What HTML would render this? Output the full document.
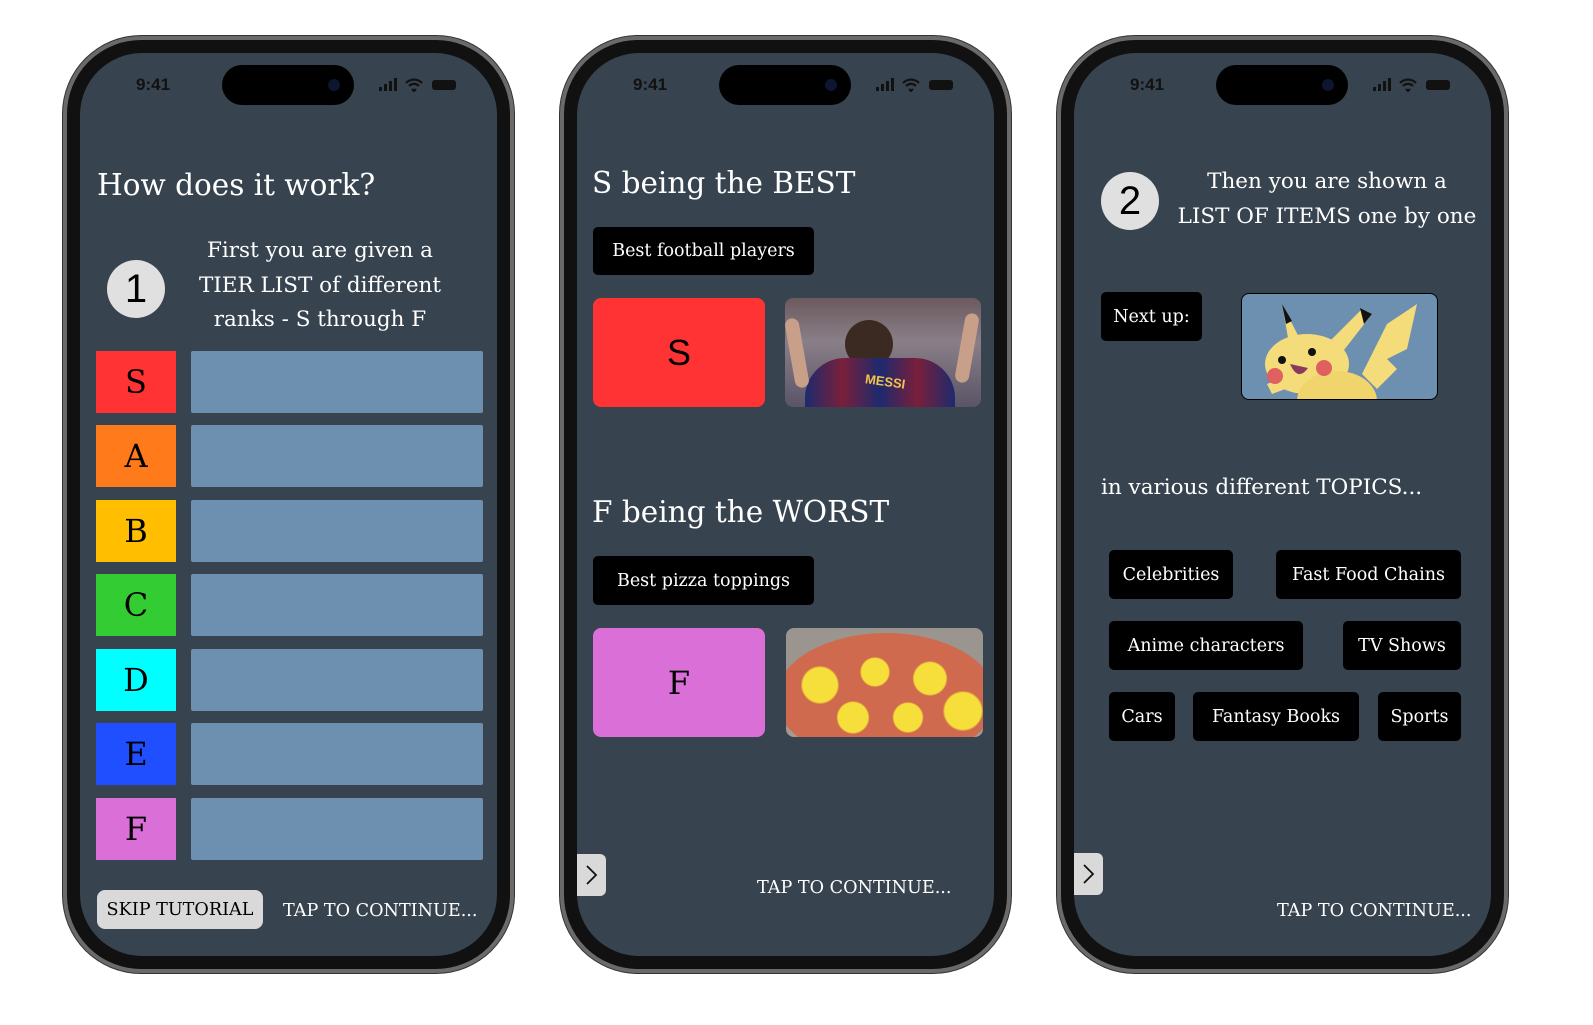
<!DOCTYPE html>
<html><head><meta charset="utf-8">
<style>
*{margin:0;padding:0;box-sizing:border-box}
body{width:1593px;height:1025px;background:#fff;position:relative;overflow:hidden;font-family:"DejaVu Serif","Liberation Serif",serif;color:#fff}
.a{position:absolute}
.phone{position:absolute;top:36px;width:451px;height:937px;border-radius:78px;background:#111;border:4px solid #6a6a6a;box-shadow:0 0 0 1px #333}
.scr{position:absolute;left:13px;top:13px;right:13px;bottom:13px;border-radius:62px;background:#37434f;overflow:hidden}
.island{position:absolute;top:12px;left:142px;width:132px;height:40px;border-radius:20px;background:#000}
.island:after{content:"";position:absolute;right:14px;top:14px;width:12px;height:12px;border-radius:6px;background:#0d1530}
.time{position:absolute;top:22px;left:56px;font:bold 17px "Liberation Sans",sans-serif;color:#111}
.stat{position:absolute;top:25px;right:38px;width:80px;height:14px}
.t{position:absolute;white-space:nowrap}
.pill{position:absolute;background:#000;border-radius:5px;color:#fff;font-size:17.5px;display:flex;align-items:center;justify-content:center;white-space:nowrap}
.lab{position:absolute;width:80px;height:62px;left:96px;color:#000;font-size:32px;display:flex;align-items:center;justify-content:center}
.bar{position:absolute;left:191px;width:292px;height:62px;background:#6d8fb0;border-radius:2px}
.circ{position:absolute;width:58px;height:58px;border-radius:29px;background:#e0e0e0;color:#000;font:40px "Liberation Sans",sans-serif;display:flex;align-items:center;justify-content:center}
.tab{position:absolute;width:29px;height:42px;background:#d9d9d9;border-radius:0 6px 6px 0}
.h{font-size:29.5px}
.m{font-size:21.5px}
.c{font-size:17.6px}
</style></head><body>

<div class="phone" style="left:63px"><div class="scr"><div class="island"></div><div class="time">9:41</div>
<svg class="stat" viewBox="0 0 80 14"><rect x="0" y="9" width="3" height="4" fill="#111"/><rect x="5" y="6" width="3" height="7" fill="#111"/><rect x="10" y="3" width="3" height="10" fill="#111"/><rect x="15" y="0" width="3" height="13" fill="#111"/><path d="M27 5a11 11 0 0 1 16 0M30 8a7 7 0 0 1 10 0M33 11l2 2 2-2" stroke="#111" stroke-width="2.2" fill="none"/><rect x="53" y="2" width="24" height="10" rx="3" fill="#111"/></svg></div></div>
<div class="phone" style="left:560px"><div class="scr"><div class="island"></div><div class="time">9:41</div>
<svg class="stat" viewBox="0 0 80 14"><rect x="0" y="9" width="3" height="4" fill="#111"/><rect x="5" y="6" width="3" height="7" fill="#111"/><rect x="10" y="3" width="3" height="10" fill="#111"/><rect x="15" y="0" width="3" height="13" fill="#111"/><path d="M27 5a11 11 0 0 1 16 0M30 8a7 7 0 0 1 10 0M33 11l2 2 2-2" stroke="#111" stroke-width="2.2" fill="none"/><rect x="53" y="2" width="24" height="10" rx="3" fill="#111"/></svg></div></div>
<div class="phone" style="left:1057px"><div class="scr"><div class="island"></div><div class="time">9:41</div>
<svg class="stat" viewBox="0 0 80 14"><rect x="0" y="9" width="3" height="4" fill="#111"/><rect x="5" y="6" width="3" height="7" fill="#111"/><rect x="10" y="3" width="3" height="10" fill="#111"/><rect x="15" y="0" width="3" height="13" fill="#111"/><path d="M27 5a11 11 0 0 1 16 0M30 8a7 7 0 0 1 10 0M33 11l2 2 2-2" stroke="#111" stroke-width="2.2" fill="none"/><rect x="53" y="2" width="24" height="10" rx="3" fill="#111"/></svg></div></div>

<!-- phone 1 -->
<div class="t h" style="left:97px;top:168px">How does it work?</div>
<div class="circ" style="left:107px;top:260px">1</div>
<div class="t m" style="left:170px;width:300px;top:234px;line-height:34.5px;text-align:center;white-space:normal">First you are given a<br>TIER LIST of different<br>ranks - S through F</div>
<div class="lab" style="top:351px;background:#ff3333">S</div><div class="bar" style="top:351px"></div>
<div class="lab" style="top:425px;background:#ff7a1a">A</div><div class="bar" style="top:425px"></div>
<div class="lab" style="top:500px;background:#ffbf00">B</div><div class="bar" style="top:500px"></div>
<div class="lab" style="top:574px;background:#33cc33">C</div><div class="bar" style="top:574px"></div>
<div class="lab" style="top:649px;background:#00ffff">D</div><div class="bar" style="top:649px"></div>
<div class="lab" style="top:723px;background:#1f4fff">E</div><div class="bar" style="top:723px"></div>
<div class="lab" style="top:798px;background:#db6fd8">F</div><div class="bar" style="top:798px"></div>
<div class="a c" style="left:97px;top:890px;width:166px;height:39px;background:#d9d9d9;border-radius:8px;color:#000;display:flex;align-items:center;justify-content:center">SKIP TUTORIAL</div>
<div class="t c" style="left:283px;top:901px">TAP TO CONTINUE...</div>

<!-- phone 2 -->
<div class="t h" style="left:592px;top:166px">S being the BEST</div>
<div class="pill" style="left:593px;top:227px;width:221px;height:48px">Best football players</div>
<div class="a" style="left:593px;top:298px;width:172px;height:109px;background:#ff3333;border-radius:8px;color:#000;font:36px 'Liberation Sans',sans-serif;display:flex;align-items:center;justify-content:center">S</div>
<div class="a" style="left:785px;top:298px;width:196px;height:109px;border-radius:8px;overflow:hidden;background:linear-gradient(180deg,#6b5a5e,#8a7f88 40%,#5a5468)">
 <div class="a" style="left:60px;top:22px;width:48px;height:48px;border-radius:24px;background:#3a2a22"></div>
 <div class="a" style="left:20px;top:60px;width:150px;height:60px;border-radius:40px 40px 0 0;background:linear-gradient(90deg,#1d2a6e,#7a1f3a,#1d2a6e,#7a1f3a,#1d2a6e)"></div>
 <div class="a" style="left:5px;top:20px;width:14px;height:70px;background:#c8a08a;border-radius:7px;transform:rotate(-10deg)"></div>
 <div class="a" style="left:175px;top:15px;width:14px;height:70px;background:#c8a08a;border-radius:7px;transform:rotate(10deg)"></div>
 <div class="t" style="left:80px;top:76px;font:bold 13px 'Liberation Sans',sans-serif;color:#f2c14e;transform:rotate(8deg)">MESSI</div>
</div>
<div class="t h" style="left:592px;top:495px">F being the WORST</div>
<div class="pill" style="left:593px;top:556px;width:221px;height:49px">Best pizza toppings</div>
<div class="a" style="left:593px;top:628px;width:172px;height:109px;background:#db6fd8;border-radius:8px;color:#000;font-size:32px;display:flex;align-items:center;justify-content:center">F</div>
<div class="a" style="left:786px;top:628px;width:197px;height:109px;border-radius:8px;overflow:hidden;background:radial-gradient(circle at 50% 120%,#c9bfb2,#9a958f 70%)">
 <div class="a" style="left:-10px;top:5px;width:220px;height:130px;border-radius:50%;background:radial-gradient(circle at 20% 40%,#f6df3a 0 9%,transparent 10%),radial-gradient(circle at 45% 30%,#f6df3a 0 9%,transparent 10%),radial-gradient(circle at 70% 35%,#f6df3a 0 9%,transparent 10%),radial-gradient(circle at 35% 65%,#f6df3a 0 9%,transparent 10%),radial-gradient(circle at 60% 65%,#f6df3a 0 9%,transparent 10%),radial-gradient(circle at 85% 60%,#f6df3a 0 9%,transparent 10%),#d06a4e"></div>
</div>
<div class="tab" style="left:577px;top:854px"><svg width="29" height="42"><path d="M10 12l9 9-9 9" stroke="#111" stroke-width="1.8" fill="none"/></svg></div>
<div class="t c" style="left:757px;top:878px">TAP TO CONTINUE...</div>

<!-- phone 3 -->
<div class="circ" style="left:1101px;top:172px">2</div>
<div class="t m" style="left:1162px;width:330px;top:165px;line-height:34.5px;text-align:center;white-space:normal">Then you are shown a<br>LIST OF ITEMS one by one</div>
<div class="pill" style="left:1101px;top:292px;width:101px;height:49px">Next up:</div>
<div class="a" style="left:1241px;top:293px;width:197px;height:107px;border:1px solid #000;border-radius:8px;background:#6d8fb0;overflow:hidden">
 <svg width="197" height="107" viewBox="0 0 197 107">
  <path d="M120 80l25-50 30-20-10 45-20 10 10 10-20 20z" fill="#f5dc7a"/>
  <path d="M40 10l8 45h15z" fill="#f5dc7a"/><path d="M40 10l4 20 6-3z" fill="#111"/>
  <path d="M75 60l45-45 10 5-35 45z" fill="#f5dc7a"/><path d="M118 14l12 6-8 10z" fill="#111"/>
  <ellipse cx="65" cy="70" rx="42" ry="30" fill="#f5dc7a"/>
  <ellipse cx="95" cy="107" rx="40" ry="30" fill="#f0d46c"/>
  <path d="M25 90l40-15 5 10-40 15z" fill="#f5dc7a"/>
  <circle cx="40" cy="66" r="4" fill="#111"/><circle cx="70" cy="58" r="4" fill="#111"/>
  <circle cx="33" cy="82" r="8" fill="#e06060"/><circle cx="82" cy="74" r="8" fill="#e06060"/>
  <path d="M48 70q8 18 18 4z" fill="#8a3a5a"/>
 </svg>
</div>
<div class="t m" style="left:1101px;top:475px">in various different TOPICS...</div>
<div class="pill" style="left:1109px;top:550px;width:124px;height:49px">Celebrities</div>
<div class="pill" style="left:1276px;top:550px;width:185px;height:49px">Fast Food Chains</div>
<div class="pill" style="left:1109px;top:621px;width:194px;height:49px">Anime characters</div>
<div class="pill" style="left:1343px;top:621px;width:118px;height:49px">TV Shows</div>
<div class="pill" style="left:1109px;top:692px;width:66px;height:49px">Cars</div>
<div class="pill" style="left:1193px;top:692px;width:166px;height:49px">Fantasy Books</div>
<div class="pill" style="left:1378px;top:692px;width:83px;height:49px">Sports</div>
<div class="tab" style="left:1074px;top:853px"><svg width="29" height="42"><path d="M10 12l9 9-9 9" stroke="#111" stroke-width="1.8" fill="none"/></svg></div>
<div class="t c" style="left:1277px;top:901px">TAP TO CONTINUE...</div>
</body></html>
